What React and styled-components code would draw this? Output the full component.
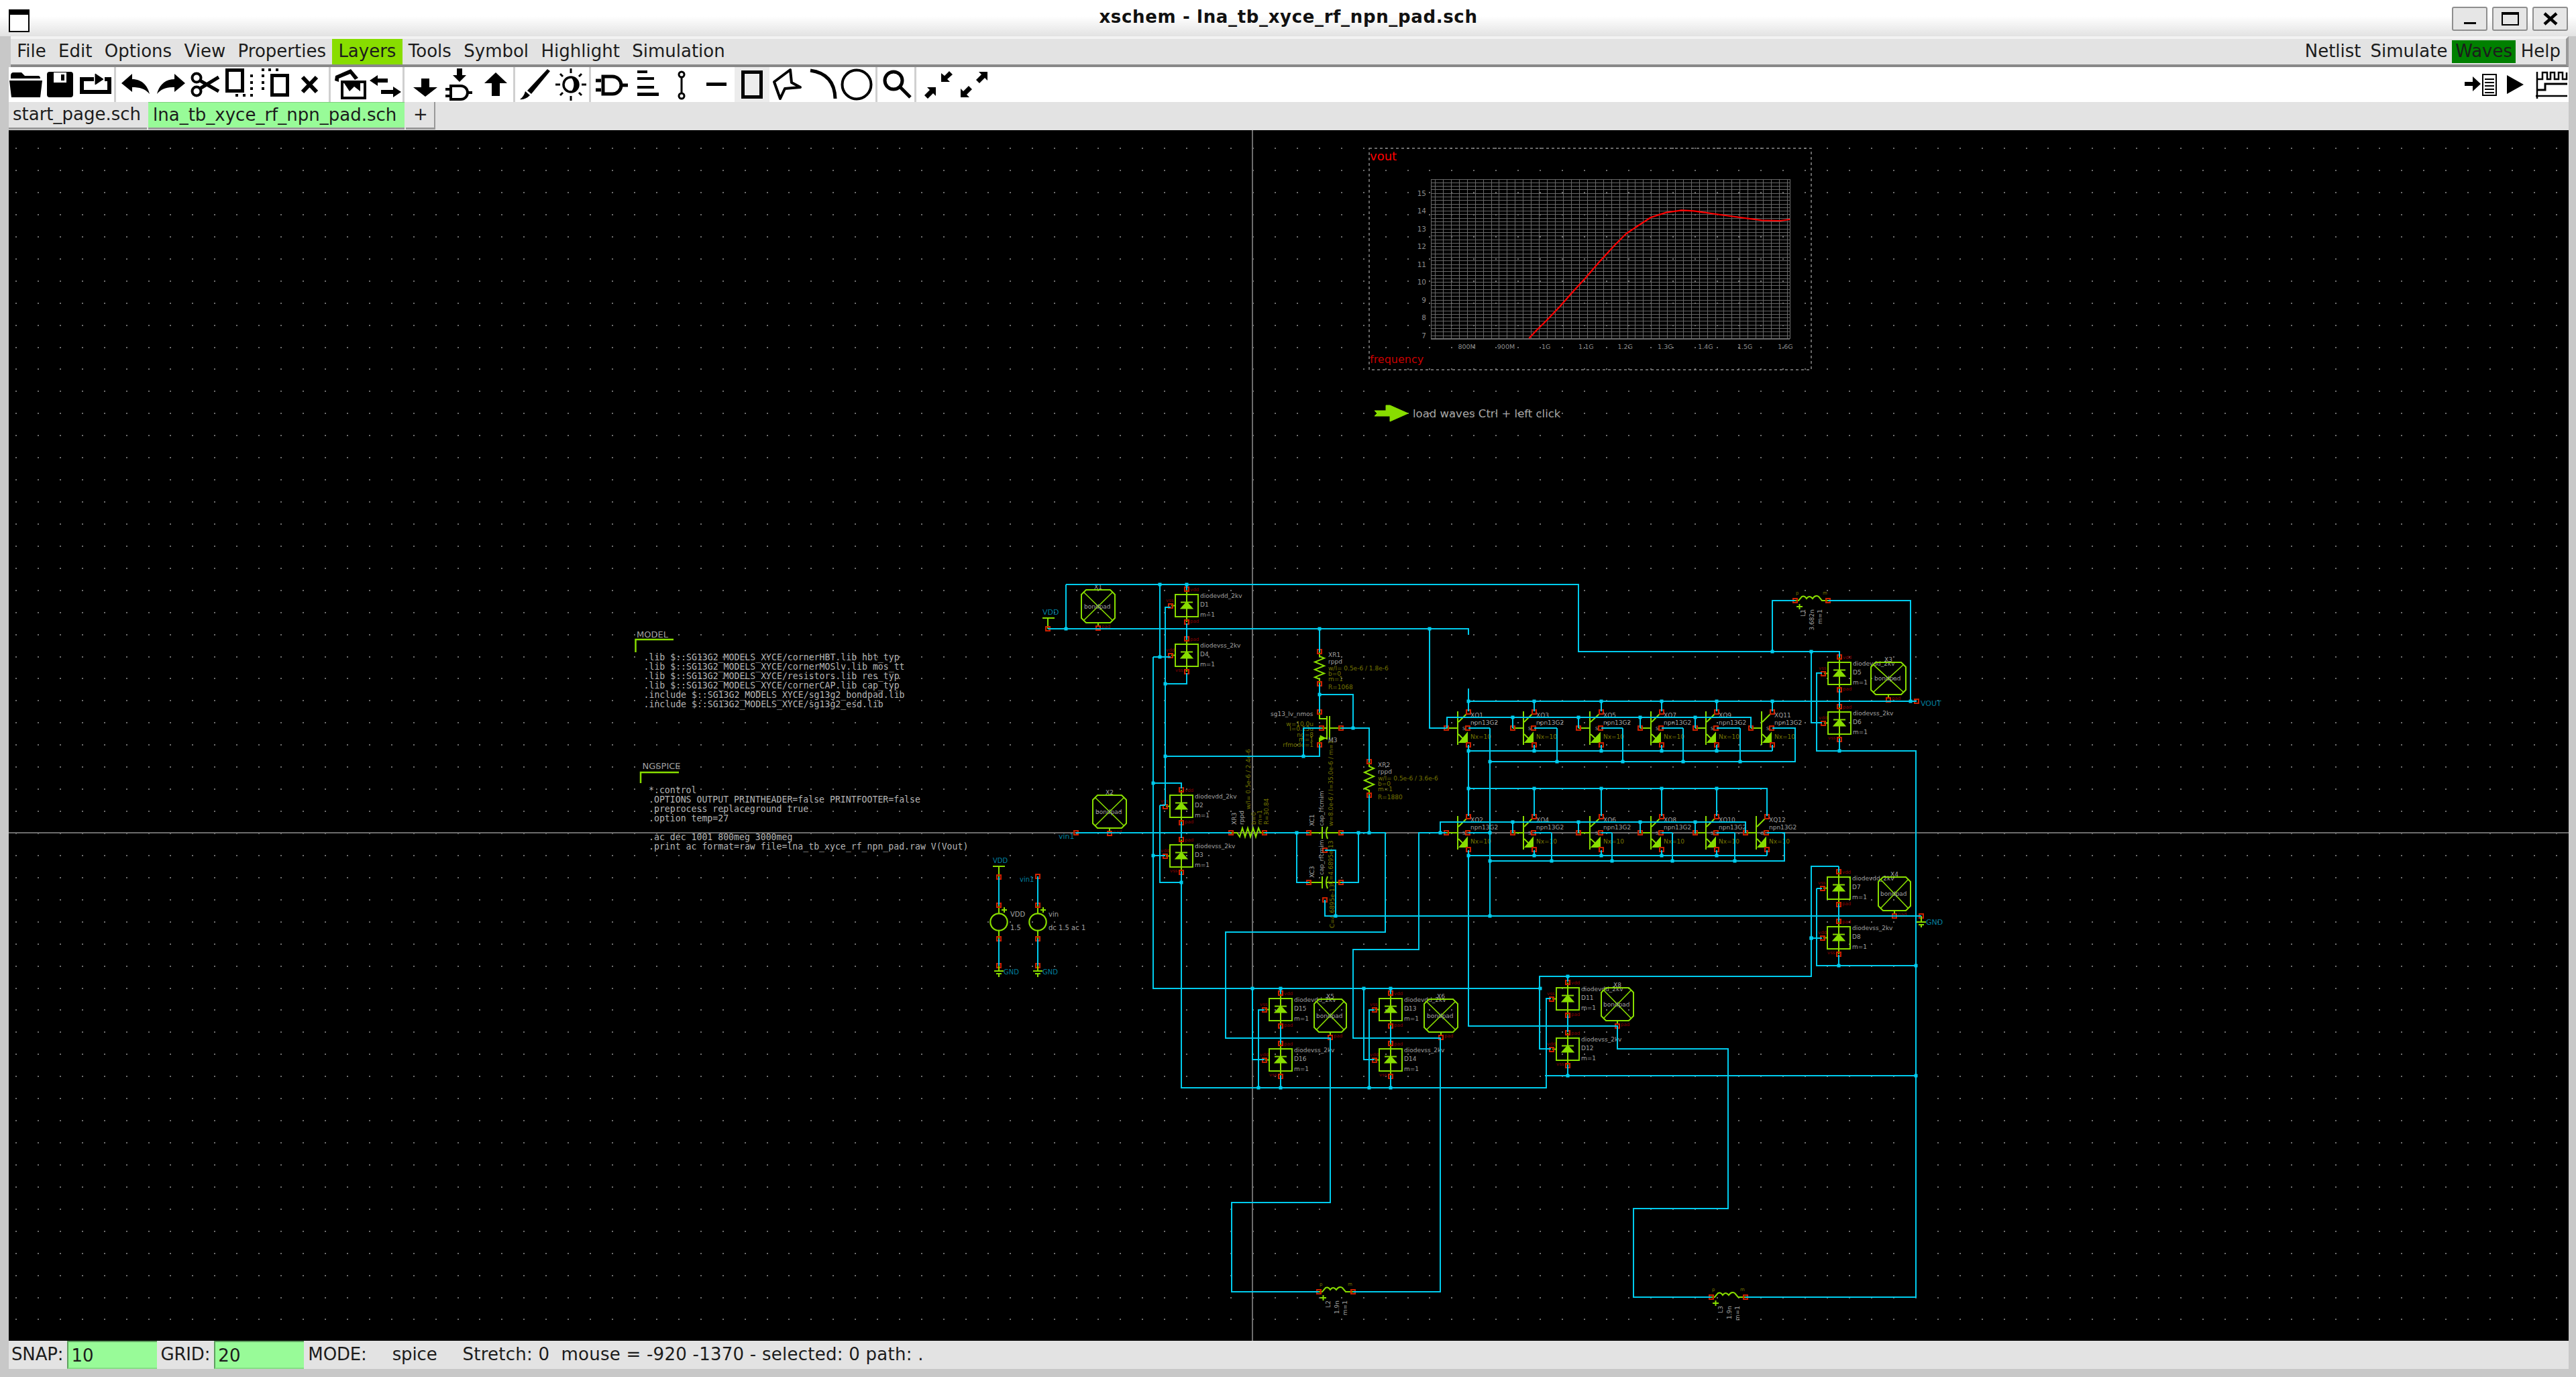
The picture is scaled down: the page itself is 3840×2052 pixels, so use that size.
import React from 'react';
import styled, { createGlobalStyle } from 'styled-components';

const Global = createGlobalStyle`
  html, body { margin: 0; padding: 0; background: #c8c8c8; overflow: hidden; }
  #root { width: 3840px; height: 2052px; }
`;

const FONT = `"DejaVu Sans", "Liberation Sans", sans-serif`;
const GREEN = '#88dd00';
const CYAN = '#00ccee';
const PINRED = '#cc2200';

const Page = styled.div`
  width: 3840px; height: 2052px; display: flex; flex-direction: column;
  font-family: ${FONT}; font-size: 26px; color: #1c1c1c; background: #c8c8c8;
`;
const TitleBar = styled.header`
  height: 54px; flex: none; box-sizing: border-box; padding: 10px 12px 8px 13px;
  display: grid; grid-template-columns: 1fr auto 1fr; align-items: start;
  background: linear-gradient(#ffffff 0, #ffffff 45%, #e2e2e2 100%);
`;
const WindowIcon = styled.div`
  width: 27px; height: 24px; margin-top: 4px; border: 2px solid #000; border-top-width: 8px; background: #fff;
`;
const Title = styled.h1`
  margin: 0; font: bold 26px/30px ${FONT}; color: #111; letter-spacing: 0.65px;
`;
const WindowButtons = styled.div`
  display: flex; gap: 7px; justify-content: flex-end;
`;
const WindowButton = styled.div`
  width: 53px; height: 36px; box-sizing: border-box; border: 2px solid #8e8e8e; border-radius: 3px;
  background: #e6e6e6; display: flex; align-items: center; justify-content: center;
`;
const Shell = styled.div`
  flex: 1; min-height: 0; display: flex; flex-direction: column; padding: 0 11px 12px 13px;
`;
const MenuBar = styled.nav`
  height: 46px; flex: none; box-sizing: border-box; margin-left: 3px;
  display: flex; align-items: flex-start; background: #e3e3e3;
  border-top: 4px solid #f2f2f2; border-bottom: 4px solid #888; border-right: 4px solid #999;
`;
const MenuItem = styled.div`
  padding: 0 ${p => p.$pad || 9.2}px; box-sizing: border-box;
  line-height: ${p => p.$inset ? 32 : 36}px; height: ${p => p.$inset ? 34 : 38}px;
  margin-top: ${p => p.$inset ? 2 : 0}px;
  background: ${p => p.$bg || 'transparent'};
  ${p => p.$push && 'margin-left: auto;'}
`;
const ToolBar = styled.div`
  height: 52px; flex: none; display: flex; background: #fff; align-items: stretch;
`;
const ToolCell = styled.div`
  width: 52.3px; height: 52px; flex: none; background: ${p => p.$active ? '#ececec' : 'transparent'};
`;
const ToolIcon = styled.svg`
  width: 52px; height: 52px; display: block;
`;
const ToolSep = styled.div`
  width: ${p => p.$w}px; flex: none; box-sizing: border-box; border-left: ${p => p.$line || 3}px solid #d0d0d0;
  margin-left: ${p => p.$ml || 0}px;
`;
const ToolSpacer = styled.div` flex: 1; `;
const TabBar = styled.div`
  height: 42px; flex: none; display: flex; background: #e3e3e3;
`;
const Tab = styled.div`
  box-sizing: border-box; height: 41px; line-height: 36px; width: ${p => p.$w}px; padding-left: ${p => p.$pl}px;
  margin-right: 2px; white-space: nowrap; flex: none;
  background: ${p => p.$active ? '#98fb98' : '#e3e3e3'};
  border-bottom: 3px solid #999; border-right: ${p => p.$edge ? '2px solid #999' : 'none'};
  border-top: ${p => p.$active ? '1px solid #7fd07f' : 'none'};
`;
const Canvas = styled.svg`
  width: 3816px; height: 1804px; flex: none; display: block; background: #000;
`;
const StatusBar = styled.footer`
  height: 42px; flex: none; display: flex; align-items: stretch; background: #e3e3e3; line-height: 40px;
  padding-left: 4px; white-space: nowrap;
`;
const StatusText = styled.span`
  margin-left: ${p => p.$ml || 0}px; white-space: pre; flex: none; letter-spacing: ${p => p.$ls || -0.15}px;
`;
const Entry = styled.div`
  width: 134px; box-sizing: border-box; margin-left: ${p => p.$ml}px; padding-left: 4px; background: #98fb98;
  border-top: 2px solid #5f9f5f; border-left: 2px solid #5f9f5f; border-bottom: 2px solid #86dd86; flex: none;
`;

/* ---- schematic primitives ---- */
const WireLine = styled.path`
  fill: none; stroke: ${CYAN}; stroke-width: 2; shape-rendering: crispEdges;
`;
const JunctionDot = styled.rect` fill: ${CYAN}; `;
const Sym = styled.path`
  fill: ${p => p.$fill ? GREEN : 'none'}; stroke: ${GREEN}; stroke-width: ${p => p.$sw || 2};
`;
const SymBox = styled.rect`
  fill: none; stroke: ${GREEN}; stroke-width: 2.5; shape-rendering: crispEdges;
`;
const SymCircle = styled.circle` fill: none; stroke: ${GREEN}; stroke-width: 2.2; `;
const PinBox = styled.rect`
  fill: none; stroke: ${PINRED}; stroke-width: 2; shape-rendering: crispEdges;
`;
const TONES = { gray: '#a2a2a2', olive: '#777700', red: '#8c0000', teal: '#007f9f', text: '#b6b6b6' };
const Tag = styled.text`
  font-family: ${p => p.$mono ? `"DejaVu Sans Mono", monospace` : FONT};
  font-size: ${p => p.$s || 9}px; fill: ${p => TONES[p.$t || 'gray']}; dominant-baseline: central;
`;
const GridDots = styled.path` fill: #6e6e6e; shape-rendering: crispEdges; `;
const Axis = styled.path` stroke: #6c6c6c; stroke-width: 2; fill: none; shape-rendering: crispEdges; `;
const GraphGrid = styled.path` stroke: #686868; stroke-width: 1; fill: none; shape-rendering: crispEdges; `;
const GraphFrame = styled.rect` fill: none; stroke: #8a8a8a; stroke-width: 1.5; stroke-dasharray: 4 4; `;
const GraphCurve = styled.polyline` fill: none; stroke: #ff0000; stroke-width: 2.2; `;
const GraphText = styled.text`
  font-family: ${FONT}; font-size: ${p => p.$s}px; fill: ${p => p.$c}; dominant-baseline: central;
`;

const OX = 1867, OY = 1241, STEP = 32.93;
const dotPath = (() => {
  let d = '';
  for (let i = -56; i < 60; i++) {
    const x = Math.round(OX + i * STEP);
    if (x < 13 || x > 3828) continue;
    for (let j = -32; j < 24; j++) {
      const y = Math.round(OY + j * STEP);
      if (y < 194 || y > 1997) continue;
      d += `M${x} ${y}h2v2h-2z`;
    }
  }
  return d;
})();

const row1 = { b: [2156, 2255, 2353, 2445, 2527, 2610], c: [2189, 2287, 2387, 2477, 2559, 2642], s: [2221, 2321, 2419, 2509, 2594, 2676] };
const row2 = { b: [2156, 2255, 2353, 2445, 2527, 2602], c: [2189, 2287, 2387, 2477, 2559, 2634], s: [2221, 2313, 2403, 2493, 2586, 2660] };

const WIRES = [
  [1589, 871, 2353, 871, 2353, 971, 2742, 971, 2742, 979],
  [1562, 937, 2189, 937, 2189, 946],
  [1589, 871, 1589, 937],
  [1729, 871, 1729, 979],
  [1769, 871, 1769, 879],
  [1769, 929, 1769, 953],
  [1769, 1003, 1769, 1019, 1737, 1019],
  [1745, 905, 1737, 905, 1737, 1200],
  [1729, 1200, 1737, 1200],
  [1729, 1200, 1729, 1315, 1761, 1315],
  [1719, 979, 1745, 979],
  [1719, 979, 1719, 1473, 2296, 1473],
  [1719, 1167, 1761, 1167, 1761, 1175],
  [1719, 1275, 1737, 1275],
  [1761, 1225, 1761, 1249],
  [1761, 1299, 1761, 1621, 2305, 1621, 2305, 1488, 2312, 1488],
  [1737, 1127, 1967, 1127, 1967, 1110],
  [1943, 1127, 1943, 1085, 1970, 1085],
  [1967, 937, 1967, 971],
  [1967, 1019, 1967, 1061],
  [1967, 1035, 2017, 1035, 2017, 1085],
  [1999, 1085, 2041, 1085, 2041, 1135],
  [2041, 1185, 2041, 1241],
  [1604, 1241, 1835, 1241],
  [1885, 1241, 1951, 1241],
  [1999, 1241, 2065, 1241, 2065, 1389, 1827, 1389, 1827, 1547, 1983, 1547, 1983, 1792, 1836, 1792, 1836, 1925, 1966, 1925],
  [2017, 1925, 2147, 1925, 2147, 1547, 2017, 1547, 2017, 1415, 2115, 1415, 2115, 1241, 2156, 1241],
  [1933, 1241, 1933, 1315, 1951, 1315],
  [1999, 1315, 2025, 1315, 2025, 1241],
  [1975, 1267, 1991, 1267, 1991, 1365],
  [1975, 1341, 1975, 1365, 2864, 1365],
  [2131, 937, 2131, 1085, 2156, 1085],
  [2189, 1026, 2189, 1060],
  [2189, 1110, 2189, 1216],
  [2189, 1267, 2189, 1529, 2411, 1529, 2411, 1563, 2576, 1563, 2576, 1801, 2435, 1801, 2435, 1933, 2551, 1933],
  [2602, 1933, 2856, 1933, 2856, 1119, 2708, 1119, 2708, 1003, 2716, 1003],
  [2189, 1045, 2857, 1045],
  [2157, 1085, 2157, 1069, 2610, 1069, 2610, 1085],
  [2189, 1119, 2642, 1119],
  [2221, 1135, 2676, 1135, 2676, 1085, 2642, 1085],
  [2221, 1085, 2221, 1365],
  [2189, 1175, 2634, 1175, 2634, 1216],
  [2147, 1241, 2147, 1225, 2602, 1225, 2602, 1241],
  [2189, 1275, 2634, 1275],
  [2221, 1283, 2660, 1283, 2660, 1241, 2634, 1241],
  [2642, 971, 2642, 895, 2676, 895],
  [2725, 895, 2848, 895, 2848, 1045],
  [2700, 971, 2700, 1077, 2716, 1077],
  [2742, 1027, 2742, 1053],
  [2742, 1101, 2742, 1119],
  [2741, 1291, 2741, 1299],
  [2741, 1348, 2741, 1373],
  [2741, 1423, 2741, 1439],
  [2708, 1324, 2716, 1324],
  [2708, 1324, 2708, 1439, 2856, 1439],
  [2700, 1398, 2716, 1398],
  [2700, 1398, 2700, 1291, 2741, 1291],
  [2700, 1291, 2700, 1455, 2295, 1455, 2295, 1563, 2312, 1563],
  [2337, 1455, 2337, 1463],
  [2337, 1513, 2337, 1538],
  [2337, 1587, 2337, 1603],
  [2303, 1603, 2856, 1603],
  [1909, 1473, 1909, 1481], [1909, 1529, 1909, 1555], [1909, 1603, 1909, 1621],
  [1885, 1505, 1876, 1505, 1876, 1621],
  [1867, 1473, 1867, 1579, 1885, 1579],
  [2073, 1473, 2073, 1481], [2073, 1529, 2073, 1555], [2073, 1603, 2073, 1621],
  [2049, 1505, 2041, 1505, 2041, 1621],
  [2033, 1473, 2033, 1579, 2049, 1579],
  [1489, 1307, 1489, 1349], [1489, 1399, 1489, 1439],
  [1547, 1306, 1547, 1349], [1547, 1399, 1547, 1439],
  ...row1.c.slice(1).map(x => [x, 1045, x, 1060]),
  ...row1.c.slice(1).map(x => [x, 1110, x, 1119]),
  ...row1.b.slice(1, 5).map(x => [x, 1069, x, 1085]),
  ...row1.c.slice(0, 5).map((x, i) => [x, 1085, row1.s[i], 1085]),
  ...row1.s.slice(1, 5).map(x => [x, 1085, x, 1135]),
  ...row2.c.slice(1, 5).map(x => [x, 1175, x, 1216]),
  ...row2.c.slice(1).map(x => [x, 1267, x, 1275]),
  ...row2.b.slice(1, 5).map(x => [x, 1225, x, 1241]),
  ...row2.c.slice(0, 5).map((x, i) => [x, 1241, row2.s[i], 1241]),
  ...row2.s.slice(1, 5).map(x => [x, 1241, x, 1283]),
];

const wirePath = WIRES.map(w => {
  let d = `M${w[0]} ${w[1]}`;
  for (let i = 2; i < w.length; i += 2) d += `L${w[i]} ${w[i + 1]}`;
  return d;
}).join('');

const SEGS = [];
const ENDS = [];
WIRES.forEach(w => {
  for (let i = 0; i + 3 < w.length; i += 2) SEGS.push([w[i], w[i + 1], w[i + 2], w[i + 3]]);
  ENDS.push([w[0], w[1]], [w[w.length - 2], w[w.length - 1]]);
});
const JUNCTIONS = ENDS.filter(([x, y]) => SEGS.some(([a, b, c, d]) => {
  if (a === c) return Math.abs(x - a) <= 1 && y > Math.min(b, d) + 1 && y < Math.max(b, d) - 1;
  return Math.abs(y - b) <= 1 && x > Math.min(a, c) + 1 && x < Math.max(a, c) - 1;
}));

const Pin = ({ x, y }) => <PinBox x={x - 3} y={y - 3} width={6} height={6} />;

const Diode = ({ cx, top, name, upper, label }) => {
  const h = 33, w = 34, left = cx - 17, mid = top + h / 2;
  const t = top - 8, b = top + h + 8;
  return (
    <g>
      <SymBox x={left} y={top} width={w} height={h} />
      <Sym d={`M${cx} ${t}V${b}M${left - 6} ${mid}H${left}`} />
      <Sym $sw={2} d={`M${cx - 9} ${mid - 5}H${cx + 9}`} />
      <Sym $fill d={`M${cx} ${mid - 5}L${cx + 8} ${mid + 4}H${cx - 8}Z`} />
      <Pin x={cx} y={t} /><Pin x={cx} y={b} /><Pin x={left - 7} y={mid} />
      <Tag $t="red" $s={7} x={cx + 5} y={t + 1}>{upper ? 'vdd' : 'pad'}</Tag>
      <Tag $t="red" $s={7} x={upper ? cx + 5 : cx - 17} y={upper ? b - 1 : b - 2}>{upper ? 'pad' : 'vss'}</Tag>
      <Tag $t="red" $s={7} x={left - 14} y={mid - 8}>{upper ? 'vss' : 'vdd'}</Tag>
      <Tag x={cx + 20} y={top + 2}>{upper ? 'diodevdd_2kv' : 'diodevss_2kv'}</Tag>
      <Tag x={cx + 20} y={top + 15}>{name}</Tag>
      <Tag x={cx + 20} y={top + 30}>m=1</Tag>
      {label}
    </g>
  );
};

const Pad = ({ x, y, w = 50, h = 49, name }) => {
  const c = 7, r = x + w, bt = y + h, cx = x + w / 2, cy = y + h / 2;
  return (
    <g>
      <Sym d={`M${x + c} ${y}H${r - c}L${r} ${y + c}V${bt - c}L${r - c} ${bt}H${x + c}L${x} ${bt - c}V${y + c}Z`} $sw={2} />
      <Sym d={`M${x + 3} ${y + 3}L${r - 3} ${bt - 3}M${r - 3} ${y + 3}L${x + 3} ${bt - 3}`} $sw={1.6} />
      <Sym d={`M${cx} ${bt}V${bt + 6}`} />
      <Pin x={cx} y={bt + 8} />
      <Tag $t="red" $s={7} x={cx + 5} y={bt + 6}>pad</Tag>
      <Tag x={cx - 21} y={cy}>bondpad</Tag>
      <Tag x={cx - 6} y={y - 4}>{name}</Tag>
    </g>
  );
};

const Bjt = ({ b, body, c, y, name }) => (
  <g>
    <Sym d={`M${body} ${y - 25}V${y + 25}M${b} ${y}H${body}M${body + 1} ${y - 9}L${c - 2} ${y - 22}M${body + 1} ${y + 9}L${c - 2} ${y + 22}`} />
    <Sym $fill d={`M${c - 2} ${y + 8}V${y + 21}H${body + 3}Z`} />
    <Pin x={b} y={y} /><Pin x={c} y={y - 24} /><Pin x={c} y={y + 25} /><Pin x={c - 1} y={y} />
    <Tag $s={7} x={c - 9} y={y + 1}>S</Tag>
    <Tag x={c + 3} y={y - 19}>{name}</Tag>
    <Tag x={c + 3} y={y - 8}>npn13G2</Tag>
    <Tag $t="olive" x={c + 3} y={y + 13}>Nx=10</Tag>
  </g>
);

const Zig = ({ x, y1, y2 }) => {
  let d = `M${x} ${y1}V${y1 + 7}`;
  const n = 6, s = (y2 - y1 - 14) / n;
  for (let i = 0; i < n; i++) d += `L${x + (i % 2 ? -7 : 7)} ${y1 + 7 + s * i + s / 2}`;
  d += `L${x} ${y2 - 7}V${y2}`;
  return <Sym d={d} />;
};

const Res = ({ x, y1, y2, lines, lx, ly }) => (
  <g>
    <Zig x={x} y1={y1} y2={y2} />
    <Pin x={x} y={y1} /><Pin x={x} y={y2} />
    {lines.map(([t, tone, dy]) => <Tag key={t} $t={tone} x={lx} y={ly + dy}>{t}</Tag>)}
  </g>
);

const Cap = ({ x1, x2, y, bulkY }) => (
  <g>
    <Sym d={`M${x1} ${y}H${x1 + 20}M${x1 + 20} ${y - 9}V${y + 9}M${x1 + 28} ${y - 9}Q${x1 + 24} ${y} ${x1 + 28} ${y + 9}M${x1 + 26} ${y}H${x2}`} />
    <Pin x={x1} y={y} /><Pin x={x2} y={y} /><Pin x={1975} y={bulkY} />
  </g>
);

const Inductor = ({ x1, x2, y, lx, vals }) => (
  <g>
    <Sym d={`M${x1} ${y}H${x1 + 5}L${x1 + 10} ${y - 6}Q${x1 + 14} ${y - 8} ${x1 + 17} ${y - 3}Q${x1 + 21} ${y - 9} ${x1 + 26} ${y - 3}Q${x1 + 30} ${y - 9} ${x1 + 35} ${y - 6}L${x1 + 40} ${y}H${x2}`} />
    <Sym d={`M${x1 + 2} ${y + 9}h9M${x1 + 6.5} ${y + 5}v8`} />
    <Pin x={x1} y={y} /><Pin x={x2} y={y} />
    <Tag $t="olive" $s={7} x={x1 + 1} y={y - 11}>p</Tag>
    <Tag $t="olive" $s={7} x={x2 - 8} y={y - 11}>m</Tag>
    {vals.map((t, i) => (
      <Tag key={t} x={lx + i * 12.5} y={y + 13} textAnchor="end" transform={`rotate(-90 ${lx + i * 12.5} ${y + 13})`}>{t}</Tag>
    ))}
  </g>
);

const VSource = ({ x, label }) => (
  <g>
    <SymCircle cx={x} cy={1374} r={12.7} />
    <Sym d={`M${x} 1349V1361M${x} 1387V1399M${x + 4} 1356h8M${x + 8} 1352v8`} />
    <Pin x={x} y={1349} /><Pin x={x} y={1399} /><Pin x={x} y={1439} />
    <Sym d={`M${x} 1439V1447M${x - 7} 1447H${x + 7}M${x - 4} 1451H${x + 4}M${x} 1451V1456`} />
    <Tag $t="teal" $s={10} x={x + 7} y={1448}>GND</Tag>
    {label}
  </g>
);

const MODEL_LINES = [
  '.lib $::SG13G2_MODELS_XYCE/cornerHBT.lib hbt_typ',
  '.lib $::SG13G2_MODELS_XYCE/cornerMOSlv.lib mos_tt',
  '.lib $::SG13G2_MODELS_XYCE/resistors.lib res_typ',
  '.lib $::SG13G2_MODELS_XYCE/cornerCAP.lib cap_typ',
  '.include $::SG13G2_MODELS_XYCE/sg13g2_bondpad.lib',
  '.include $::SG13G2_MODELS_XYCE/sg13g2_esd.lib',
];
const SPICE_LINES = [
  ['*.control', 1177],
  ['.OPTIONS OUTPUT PRINTHEADER=false PRINTFOOTER=false', 1191],
  ['.preprocess replaceground true', 1205],
  ['.option temp=27', 1219],
  ['.ac dec 1001 800meg 3000meg', 1247],
  ['.print ac format=raw file=lna_tb_xyce_rf_npn_pad.raw V(Vout)', 1261],
];

const gx = X => 2020 + X / 2.178;
const gy = Y => 200 + Y / 3;
const CURVE = [[565, 912], [590, 875], [620, 835], [665, 770], [710, 700], [750, 640], [790, 575], [840, 500], [880, 445], [920, 408], [960, 372], [1010, 350], [1060, 340], [1100, 343], [1170, 357], [1250, 372], [1320, 385], [1380, 387], [1412, 381]]
  .map(([a, b]) => `${gx(a).toFixed(1)},${gy(b).toFixed(1)}`).join(' ');
const L = 2133, R = 2668, T = 267, B = 505;
const graphGridPath = (() => {
  let d = '';
  for (let x = 2186.7 - 11.94 * 4; x < R; x += 11.94) d += `M${Math.round(x)} ${T}V${B}`;
  for (let y = 499.7; y > T; y -= 5.3) d += `M${L} ${Math.round(y)}H${R}`;
  return d + `M${L} ${T}H${R}V${B}M${L} ${T}V${B}`;
})();
const XTICKS = [['800M', 363], ['900M', 490], ['1G', 620], ['1.1G', 750], ['1.2G', 877], ['1.3G', 1007], ['1.4G', 1138], ['1.5G', 1266], ['1.6G', 1397]];
const YTICKS = ['15', '14', '13', '12', '11', '10', '9', '8', '7'];

const Graph = () => (
  <g>
    <GraphFrame x={2041} y={221} width={659} height={330} />
    <GraphText $s={18} $c="#ff0000" x={2042} y={232}>vout</GraphText>
    <GraphText $s={16} $c="#c80000" x={2042} y={535}>frequency</GraphText>
    <GraphGrid d={graphGridPath} />
    <Axis d={`M${L} ${B}H${R}`} />
    <GraphCurve points={CURVE} />
    {XTICKS.map(([t, X]) => <GraphText key={t} $s={9.5} $c="#8e8e8e" x={gx(X)} y={516} textAnchor="middle">{t}</GraphText>)}
    {YTICKS.map((t, i) => <GraphText key={t} $s={10.5} $c="#8e8e8e" x={2126} y={287.5 + i * 26.5} textAnchor="end">{t}</GraphText>)}
    <Sym $fill d="M2049 612H2066V604H2072L2099 616L2072 628V620H2066H2049L2053 616Z" $sw={1} />
    <GraphText $s={16.5} $c="#a8a8a8" x={2106} y={616}>load waves Ctrl + left click</GraphText>
  </g>
);

const Rot = ({ x, y, t, tone, s }) => (
  <Tag $t={tone} $s={s} x={x} y={y} transform={`rotate(-90 ${x} ${y})`}>{t}</Tag>
);

const Schematic = () => (
  <Canvas viewBox="13 194 3816 1804">
    <GridDots d={dotPath} />
    <Axis d={`M1867 194V1998M13 1241H3829`} />

    <Graph />

    <Tag $s={13} x={949} y={945}>MODEL</Tag>
    <Sym $sw={2.5} d="M1004 953H947.5V972" />
    {MODEL_LINES.map((t, i) => <Tag key={t} $mono $s={13.2} $t="text" x={959.5} y={979 + i * 14}>{t}</Tag>)}
    <Tag $s={13} x={957.5} y={1141}>NGSPICE</Tag>
    <Sym $sw={2.5} d="M1012 1151H955V1167" />
    {SPICE_LINES.map(([t, y]) => <Tag key={t} $mono $s={13.2} $t="text" x={967} y={y}>{t}</Tag>)}

    <Diode cx={1769} top={886} name="D1" upper />
    <Diode cx={1769} top={960} name="D4" />
    <Diode cx={1761} top={1185} name="D2" upper />
    <Diode cx={1761} top={1259} name="D3" />
    <Diode cx={2742} top={987} name="D5" upper />
    <Diode cx={2742} top={1061} name="D6" />
    <Diode cx={2741} top={1307} name="D7" upper />
    <Diode cx={2741} top={1381} name="D8" />
    <Diode cx={1909} top={1488} name="D15" upper />
    <Diode cx={1909} top={1563} name="D16" />
    <Diode cx={2073} top={1488} name="D13" upper />
    <Diode cx={2073} top={1563} name="D14" />
    <Diode cx={2337} top={1472} name="D11" upper />
    <Diode cx={2337} top={1547} name="D12" />

    <Pad x={1612} y={879} name="X1" />
    <Pad x={1629} y={1185} name="X2" />
    <Pad x={2789} y={987} w={52} h={48} name="X3" />
    <Pad x={2800} y={1307} w={48} h={50} name="X4" />
    <Pad x={1959} y={1489} w={48} h={49} name="X5" />
    <Pad x={2123} y={1489} w={50} h={49} name="X6" />
    <Pad x={2387} y={1472} w={48} h={49} name="X8" />

    {row1.b.map((b, i) => (
      <Bjt key={b} b={b} body={[2173, 2271, 2370, 2461, 2543, 2626][i]} c={row1.c[i]} y={1085} name={`XQ${2 * i + 1}`} />
    ))}
    {row2.b.map((b, i) => (
      <Bjt key={b} b={b} body={[2173, 2271, 2370, 2461, 2543, 2618][i]} c={row2.c[i]} y={1241} name={`XQ${2 * i + 2}`} />
    ))}

    <Res x={1967} y1={971} y2={1019} lx={1980} ly={976} lines={[
      ['XR1', 'gray', 0], ['rppd', 'gray', 10], ['w/l= 0.5e-6 / 1.8e-6', 'olive', 20],
      ['b=0', 'olive', 28], ['m=1', 'olive', 36], ['R=1068', 'olive', 48]]} />
    <Res x={2041} y1={1135} y2={1185} lx={2054} ly={1140} lines={[
      ['XR2', 'gray', 0], ['rppd', 'gray', 10], ['w/l= 0.5e-6 / 3.6e-6', 'olive', 20],
      ['b=0', 'olive', 28], ['m=1', 'olive', 36], ['R=1880', 'olive', 48]]} />

    <Sym d="M1835 1241H1844L1848 1247L1852 1234L1856 1247L1860 1234L1864 1247L1868 1234L1872 1247L1876 1234L1879 1241H1885" />
    <Pin x={1835} y={1241} /><Pin x={1885} y={1241} />
    <Rot x={1840} y={1229} t="XR3" />
    <Rot x={1851} y={1229} t="rppd" />
    <Rot x={1861} y={1206} t="w/l= 0.5e-6 / 2.4e-6" tone="olive" />
    <Rot x={1869} y={1229} t="b=0" tone="olive" />
    <Rot x={1878} y={1229} t="m=1" tone="olive" />
    <Rot x={1888} y={1229} t="R=30.84" tone="olive" />

    <Cap x1={1951} x2={1999} y={1241} bulkY={1267} />
    <Cap x1={1951} x2={1999} y={1315} bulkY={1341} />
    <Rot x={1956} y={1231} t="XC1" />
    <Rot x={1970} y={1231} t="cap_rfcmim" />
    <Rot x={1984} y={1231} t="w=8.0e-6 / l=35.0e-6 / m=1" tone="olive" />
    <Rot x={1956} y={1308} t="XC3" />
    <Rot x={1970} y={1304} t="cap_rfcmim" />
    <Rot x={1984} y={1318} t="C=4.6895e-13" tone="olive" />
    <Rot x={1986} y={1383} t="C=4.6895e-13" tone="olive" />

    <Sym d="M1967 1061V1071H1977M1967 1110V1100H1977M1978 1067V1102M1982 1067V1102M1982 1085H1999M1970 1085H1978" />
    <Sym $fill d="M1968 1096L1976 1100L1968 1104Z" $sw={1} />
    <Pin x={1967} y={1061} /><Pin x={1967} y={1110} /><Pin x={1999} y={1085} /><Pin x={1970} y={1085} />
    <Tag x={1894} y={1064}>sg13_lv_nmos</Tag>
    <Tag x={1980} y={1103}>M3</Tag>
    {[['w=10.0u', 1079], ['l=0.13u', 1086], ['ng=8', 1095], ['m=1', 1102], ['rfmode=1', 1110]].map(([t, y]) => (
      <Tag key={t} $t="olive" x={1958} y={y} textAnchor="end">{t}</Tag>
    ))}

    <Inductor x1={2676} x2={2725} y={895} lx={2688} vals={['L1', '3.682n', 'm=1']} />
    <Inductor x1={1966} x2={2017} y={1925} lx={1980} vals={['L2', '1.9n', 'm=1']} />
    <Inductor x1={2551} x2={2602} y={1933} lx={2565} vals={['L3', '1.9n', 'm=1']} />

    <Sym d="M1562 937V921M1554 921H1572" />
    <Pin x={1562} y={937} />
    <Tag $t="teal" $s={11} x={1554} y={912}>VDD</Tag>
    <Pin x={1604} y={1241} />
    <Tag $t="teal" $s={11} x={1578} y={1246}>vin1</Tag>
    <Pin x={2857} y={1045} />
    <Tag $t="teal" $s={11} x={2863} y={1048}>VOUT</Tag>
    <Pin x={2864} y={1365} />
    <Sym d="M2864 1365V1374M2857 1374H2871M2860 1378H2868M2864 1378V1382" />
    <Tag $t="teal" $s={11} x={2871} y={1374}>GND</Tag>

    <VSource x={1489} label={<>
      <Sym d="M1489 1307V1291M1480 1291H1498" />
      <Pin x={1489} y={1307} />
      <Tag $t="teal" $s={10} x={1480} y={1282}>VDD</Tag>
      <Tag x={1506} y={1362} $s={10}>VDD</Tag>
      <Tag x={1506} y={1382} $s={10}>1.5</Tag>
    </>} />
    <VSource x={1547} label={<>
      <Tag $t="teal" $s={10} x={1520} y={1310}>vin1</Tag>
      <Pin x={1547} y={1306} />
      <Tag x={1563} y={1362} $s={10}>vin</Tag>
      <Tag x={1563} y={1382} $s={10}>dc 1.5 ac 1</Tag>
    </>} />

    <WireLine d={wirePath} />
    {JUNCTIONS.map(([x, y], i) => <JunctionDot key={i} x={x - 2.5} y={y - 2.5} width={5} height={5} />)}
  </Canvas>
);

/* ---- toolbar icons ---- */
const Ico = ({ children }) => <ToolIcon viewBox="0 0 52 52">{children}</ToolIcon>;
const dots = pts => pts.map(([x, y]) => <rect key={`${x}-${y}`} x={x - 2} y={y - 2} width={4} height={4} />);
const ICONS = {
  folder: <Ico><path d="M3 13Q3 8 7 8H19L24 13H44Q47 13 47 17H3Z" /><path d="M1 20H50L47 45H4Z" /></Ico>,
  save: <Ico><rect x="5" y="7" width="39" height="38" rx="4" /><rect x="15" y="8" width="19" height="15" fill="#fff" /><rect x="26" y="11" width="5" height="9" /></Ico>,
  reload: <Ico><path d="M22 18H4V37H45V18H38" fill="none" stroke="#000" strokeWidth="6" /><path d="M24 10L36 18L24 26Z" stroke="#000" /></Ico>,
  undo: <Ico><path d="M5 24L21 10V18C36 18 44 28 47 40C40 32 32 30 21 30V37Z" /></Ico>,
  redo: <Ico><path d="M48 24L32 10V18C17 18 9 28 6 40C13 32 21 30 32 30V37Z" /></Ico>,
  cut: <Ico><circle cx="13" cy="16" r="6.5" fill="none" stroke="#000" strokeWidth="4" /><circle cx="13" cy="36" r="6.5" fill="none" stroke="#000" strokeWidth="4" /><path d="M18 20L46 36M18 32L46 15" stroke="#000" strokeWidth="5" /></Ico>,
  copy: <Ico><rect x="5.5" y="4.5" width="23" height="31" fill="none" stroke="#000" strokeWidth="5" />{dots([[42, 13], [42, 23], [42, 32], [42, 42], [31, 42], [20, 42]])}</Ico>,
  move: <Ico><rect x="20.5" y="12.5" width="23" height="29" fill="none" stroke="#000" strokeWidth="5" />{dots([[7, 4], [7, 13], [7, 23], [7, 32], [17, 4], [28, 4]])}</Ico>,
  del: <Ico><path d="M14 15L35 37M35 15L14 37" stroke="#000" strokeWidth="6" /></Ico>,
  hier: <Ico><rect x="14" y="22" width="34" height="24" fill="#fff" stroke="#000" strokeWidth="4" /><path d="M17 24L25 36L32 29L41 36V24Z" /><path d="M3 20L4 13L27 3L38 16L33 19L26 10L9 17V22Z" /></Ico>,
  swap: <Ico><path d="M3 20L15 12V17H30V23H15V28Z" /><path d="M50 37L38 29V34H20V40H38V45Z" /></Ico>,
  down: <Ico><path d="M20 17H32V30H44L26 44L8 30H20Z" /></Ico>,
  place: <Ico><path d="M20 2H28V12H34L24 22L14 12H20Z" /><path d="M11 28H26A10 10 0 0 1 26 48H11Z" fill="#fff" stroke="#000" strokeWidth="4" /><path d="M3 33H10M3 43H10M36 38H43" stroke="#000" strokeWidth="4" /></Ico>,
  up: <Ico><path d="M26 8L43 24H32V43H20V24H9Z" /></Ico>,
  brush: <Ico><path d="M45 3L49 6L21 40L15 35Z" /><path d="M12 36L19 42Q12 49 4 48Q10 44 12 36Z" /></Ico>,
  sun: <Ico><circle cx="28" cy="26" r="11" fill="#fff" stroke="#000" strokeWidth="3.5" /><path d="M28 15A11 11 0 0 1 28 37A16 16 0 0 0 28 15Z" /><path d="M28 2V9M28 43V50M5 26H12M44 26H51M12 10L16 14M44 10L40 14M12 42L16 38M44 42L40 38" stroke="#000" strokeWidth="3" /></Ico>,
  gate: <Ico><path d="M13 14H27A13 13 0 0 1 27 40H13Z" fill="#fff" stroke="#000" strokeWidth="5" /><path d="M2 20H10M2 34H10M42 27H50" stroke="#000" strokeWidth="5" /></Ico>,
  lines: <Ico><rect x="12" y="5" width="15" height="4" /><rect x="12" y="15" width="25" height="4" /><rect x="12" y="28" width="25" height="4" /><rect x="12" y="38" width="32" height="5" /></Ico>,
  wire: <Ico><circle cx="26" cy="11" r="4" fill="none" stroke="#000" strokeWidth="3" /><circle cx="26" cy="43" r="4" fill="none" stroke="#000" strokeWidth="3" /><path d="M26 15V39" stroke="#000" strokeWidth="3" /></Ico>,
  line: <Ico><rect x="10" y="23" width="30" height="5" /></Ico>,
  rect: <Ico><rect x="12.5" y="7.5" width="27" height="37" fill="none" stroke="#000" strokeWidth="5" /></Ico>,
  poly: <Ico><path d="M31 4L33 23L46 30L23 32L16 47L7 22Z" fill="none" stroke="#000" strokeWidth="4" strokeLinejoin="round" /></Ico>,
  arc: <Ico><path d="M8 5Q44 10 45 47" fill="none" stroke="#000" strokeWidth="5" /></Ico>,
  circle: <Ico><circle cx="25" cy="26" r="21.5" fill="none" stroke="#000" strokeWidth="4" /></Ico>,
  zoom: <Ico><circle cx="22" cy="20" r="13" fill="none" stroke="#000" strokeWidth="5" /><path d="M32 30L47 45" stroke="#000" strokeWidth="5" /></Ico>,
  shrink: <Ico><path d="M11 30H24V43L20 39L12 47L7 42L15 34Z" /><path d="M32 9V22H45L41 18L49 11L44 6L37 13Z" /></Ico>,
  expand: <Ico><path d="M35 7H48V20L44 16L36 24L31 19L39 11Z" /><path d="M21 45H8V32L12 36L20 28L25 33L17 41Z" /></Ico>,
  netlist: <Ico><path d="M2 22H14V14L26 25L14 36V28H2Z" /><rect x="29" y="11" width="20" height="31" fill="#fff" stroke="#000" strokeWidth="2" /><path d="M32 18H46M32 23H46M32 28H46M32 33H46M32 38H46" stroke="#000" strokeWidth="2" /></Ico>,
  play: <Ico><path d="M13 12L38 26L13 40Z" /></Ico>,
  waves: <Ico><path d="M5 7V47M3 43H50" stroke="#000" strokeWidth="2.5" fill="none" /><path d="M5 18H13V8H20V18H25V8H31V18H37V8H43V18H49V8" fill="none" stroke="#000" strokeWidth="2.5" /><path d="M5 34H17V25H50" fill="none" stroke="#000" strokeWidth="3" /></Ico>,
};

const Tool = ({ name, active }) => <ToolCell $active={active}>{ICONS[name]}</ToolCell>;

const MENU_L = ['File', 'Edit', 'Options', 'View', 'Properties'];
const MENU_M = ['Tools', 'Symbol', 'Highlight', 'Simulation'];

const App = () => (
  <Page>
    <Global />
    <TitleBar>
      <WindowIcon />
      <Title>xschem - lna_tb_xyce_rf_npn_pad.sch</Title>
      <WindowButtons>
        <WindowButton>
          <svg width="20" height="20" viewBox="0 0 20 20"><rect x="1" y="15" width="18" height="3" /></svg>
        </WindowButton>
        <WindowButton>
          <svg width="28" height="22" viewBox="0 0 28 22"><rect x="2" y="2" width="24" height="18" fill="none" stroke="#000" strokeWidth="2" /><rect x="2" y="1" width="24" height="4" /></svg>
        </WindowButton>
        <WindowButton>
          <svg width="22" height="20" viewBox="0 0 22 20"><path d="M2 2L20 18M20 2L2 18" stroke="#000" strokeWidth="4.5" /></svg>
        </WindowButton>
      </WindowButtons>
    </TitleBar>
    <Shell>
      <MenuBar>
        {MENU_L.map(m => <MenuItem key={m}>{m}</MenuItem>)}
        <MenuItem $bg="#88dd00">Layers</MenuItem>
        {MENU_M.map(m => <MenuItem key={m}>{m}</MenuItem>)}
        <MenuItem $push $pad={7}>Netlist</MenuItem>
        <MenuItem $pad={7}>Simulate</MenuItem>
        <MenuItem $bg="#008000" $pad={4.7} $inset>Waves</MenuItem>
        <MenuItem $pad={8}>Help</MenuItem>
      </MenuBar>
      <ToolBar>
        <Tool name="folder" /><Tool name="save" /><Tool name="reload" />
        <ToolSep $w={6} />
        <Tool name="undo" /><Tool name="redo" /><Tool name="cut" /><Tool name="copy" /><Tool name="move" /><Tool name="del" />
        <ToolSep $w={6} />
        <Tool name="hier" /><Tool name="swap" />
        <ToolSep $w={8} />
        <Tool name="down" /><Tool name="place" /><Tool name="up" />
        <ToolSep $w={6} />
        <Tool name="brush" /><Tool name="sun" />
        <ToolSep $w={8} $ml={2} />
        <Tool name="gate" /><Tool name="lines" /><Tool name="wire" /><Tool name="line" />
        <Tool name="rect" active /><Tool name="poly" /><Tool name="arc" /><Tool name="circle" />
        <ToolSep $w={5} $ml={1} />
        <Tool name="zoom" />
        <ToolSep $w={8} $ml={1} />
        <Tool name="shrink" /><Tool name="expand" />
        <ToolSpacer />
        <Tool name="netlist" /><Tool name="play" /><Tool name="waves" />
      </ToolBar>
      <TabBar>
        <Tab $w={206} $pl={6}>start_page.sch</Tab>
        <Tab $w={382} $pl={7} $active>lna_tb_xyce_rf_npn_pad.sch</Tab>
        <Tab $w={44} $pl={11} $edge>+</Tab>
      </TabBar>
      <Schematic />
      <StatusBar>
        <StatusText>SNAP:</StatusText>
        <Entry $ml={6}>10</Entry>
        <StatusText $ml={5}>GRID:</StatusText>
        <Entry $ml={6}>20</Entry>
        <StatusText $ml={6}>MODE:</StatusText>
        <StatusText $ml={38}>spice</StatusText>
        <StatusText $ml={38} $ls={0.25}>Stretch: 0  mouse = -920 -1370 - selected: 0 path: .</StatusText>
      </StatusBar>
    </Shell>
  </Page>
);

export default App;
